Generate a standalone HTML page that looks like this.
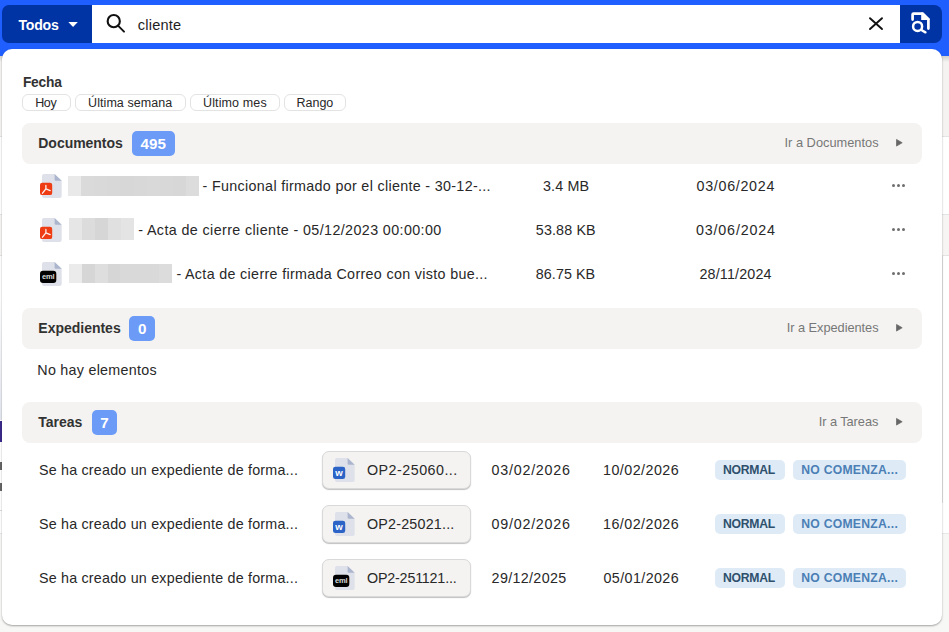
<!DOCTYPE html>
<html><head><meta charset="utf-8">
<style>
*{box-sizing:border-box;margin:0;padding:0}
html,body{width:949px;height:632px;overflow:hidden;background:#f7f7f5;font-family:"Liberation Sans",sans-serif;color:#2e2e2e}
.abs{position:absolute}
.t{position:absolute;white-space:nowrap;line-height:1}
#topbar{position:absolute;left:0;top:0;width:949px;height:56px;background:#1f5eff}
#todos{left:2px;top:5px;width:90px;height:38px;background:#0033a3;border-radius:7px 0 0 7px}
#input{left:92px;top:5px;width:808px;height:38px;background:#fff}
#sbtn{left:900px;top:5px;width:42px;height:38px;background:#0033a3;border-radius:0 8px 8px 0}
#panel{left:2px;top:49px;width:940px;height:576px;background:#fff;border-radius:10px;box-shadow:0 1px 2px rgba(0,0,0,.35)}
.bar{position:absolute;left:22px;width:900px;height:41px;background:#f4f3f1;border-radius:8px}
.cnt{position:absolute;height:25px;background:#6b9bf7;border-radius:5px}
.tri{position:absolute;width:0;height:0;border-top:3.75px solid transparent;border-bottom:3.75px solid transparent;border-left:6.4px solid #666}
.chip{position:absolute;top:94px;height:16.6px;border:1px solid #e3e3e3;border-radius:6px;background:#fff}
.blur{position:absolute;display:flex}
.blur i{display:block;flex:1;height:100%}
.dots{position:absolute;width:14px;height:4px}
.dots b{position:absolute;top:0;width:3px;height:3px;border-radius:50%;background:#6e6e6e}
.fchip{position:absolute;left:322px;width:149px;height:38px;background:#f4f3f1;border:1px solid #d9d9d9;border-radius:7px;box-shadow:0 1px 1px rgba(0,0,0,.25)}
.st{position:absolute;height:20px;background:#deebf7;border-radius:5px}
</style></head><body>
<div class="abs" style="left:0;top:56px;width:949px;height:80px;background:#f4f3f1"></div><div class="abs" style="left:0;top:56px;width:949px;height:6px;background:linear-gradient(#cfcfcf,#f4f3f1)"></div><div class="abs" style="left:0;top:135.5px;width:949px;height:1px;background:#e4e4e4"></div><div class="abs" style="left:0;top:136.5px;width:949px;height:77px;background:#fff"></div><div class="abs" style="left:0;top:213.5px;width:949px;height:1px;background:#e4e4e4"></div><div class="abs" style="left:0;top:214.5px;width:949px;height:40.5px;background:#f6f5f3"></div><div class="abs" style="left:0;top:255px;width:949px;height:1px;background:#e4e4e4"></div><div class="abs" style="left:0;top:256px;width:949px;height:277px;background:#fff"></div><div class="abs" style="left:0;top:300px;width:2px;height:120px;background:linear-gradient(#fff,#e3e6ee)"></div><div class="abs" style="left:0;top:420.5px;width:2px;height:21px;background:#3b2a8c"></div><div class="abs" style="left:0;top:462px;width:1.5px;height:8px;background:#666"></div><div class="abs" style="left:0;top:483px;width:1.5px;height:8px;background:#666"></div><div class="abs" style="left:0;top:509.5px;width:2px;height:1px;background:#ddd"></div><div class="abs" style="left:0;top:533px;width:949px;height:1px;background:#e8e8e8"></div><div class="abs" style="left:942px;top:256px;width:1px;height:247px;background:#e2e2e2"></div>
<div id="topbar"></div><div id="todos" class="abs"></div><div id="input" class="abs"></div><div id="sbtn" class="abs"></div><div id="panel" class="abs"></div>
<svg class="abs" style="left:0;top:0" width="949" height="50"><polygon points="68.3,21.9 77.8,21.9 73.05,26.9" fill="#fff"/><circle cx="113.75" cy="21.15" r="6.1" stroke="#111" stroke-width="2.1" fill="none"/><line x1="118" y1="25.6" x2="124" y2="31.6" stroke="#111" stroke-width="2" stroke-linecap="round"/><path d="M870 18.2L882 29M882 18.2L870 29" stroke="#111" stroke-width="1.9" stroke-linecap="round"/><path d="M912.6 19.6V14.6Q912.6 13.7 913.5 13.7H922.6L928.4 19.5V28.6" stroke="#fff" stroke-width="2.7" fill="none" stroke-linecap="round" stroke-linejoin="round"/><path d="M921.2 12.4H923.3L929.7 18.8V20H921.2Z" fill="#fff"/><circle cx="917.6" cy="26.4" r="4.5" stroke="#fff" stroke-width="2.5" fill="none"/><line x1="921.4" y1="30" x2="925.4" y2="32.3" stroke="#fff" stroke-width="2.5" stroke-linecap="round"/></svg>
<div class="chip" style="left:22px;width:48.6px"></div>
<div class="chip" style="left:75px;width:110.5px"></div>
<div class="chip" style="left:190.4px;width:89.2px"></div>
<div class="chip" style="left:284.3px;width:62.2px"></div>
<div class="bar" style="top:123px"></div>
<div class="cnt" style="left:132px;top:131px;width:43px"></div>
<svg class="abs" style="left:890px;top:133px" width="20" height="20" viewBox="890 133 20 20"><polygon points="896.5,139.4 902.2,142.75 896.5,146.1" fill="#666" stroke="#666" stroke-width="0.7" stroke-linejoin="round"/></svg>
<div class="bar" style="top:308px"></div>
<div class="cnt" style="left:129px;top:316px;width:26px"></div>
<svg class="abs" style="left:890px;top:318px" width="20" height="20" viewBox="890 318 20 20"><polygon points="896.5,324.4 902.2,327.75 896.5,331.1" fill="#666" stroke="#666" stroke-width="0.7" stroke-linejoin="round"/></svg>
<div class="bar" style="top:402px"></div>
<div class="cnt" style="left:92px;top:410px;width:25px"></div>
<svg class="abs" style="left:890px;top:412px" width="20" height="20" viewBox="890 412 20 20"><polygon points="896.5,418.4 902.2,421.75 896.5,425.1" fill="#666" stroke="#666" stroke-width="0.7" stroke-linejoin="round"/></svg>
<svg class="abs" style="left:40px;top:174px" width="24" height="25" viewBox="0 0 24 25"><path d="M4 0H14.6L21.7 7V22A2 2 0 0 1 19.7 24H4A2 2 0 0 1 2 22V2A2 2 0 0 1 4 0Z" fill="#dee1e9"/><path d="M14.6 0L21.7 6.8H16A1.4 1.4 0 0 1 14.6 5.4Z" fill="#abb5cd"/><rect x="0" y="8.7" width="12.2" height="12.4" rx="2.2" fill="#ee3c14"/><path d="M5.9 11.4V14.8L2.5 19.2M5.9 14.8L10.2 16.6" stroke="#fff" stroke-width="1.3" fill="none" stroke-linecap="round" stroke-linejoin="round" opacity=".92"/></svg>
<div class="blur" style="left:68.1px;top:176.1px;width:130.9px;height:19.5px"><i style="background:#e9e9e9"></i><i style="background:#dadada"></i><i style="background:#d9d9d9"></i><i style="background:#d8d8d8"></i><i style="background:#d7d7d7"></i><i style="background:#d8d8d8"></i><i style="background:#d9d9d9"></i><i style="background:#d8d8d8"></i><i style="background:#d7d7d7"></i><i style="background:#dcdcdc"></i></div>
<div class="dots" style="left:891.5px;top:184.4px"><b style="left:0"></b><b style="left:5px"></b><b style="left:10px"></b></div>
<svg class="abs" style="left:40px;top:218px" width="24" height="25" viewBox="0 0 24 25"><path d="M4 0H14.6L21.7 7V22A2 2 0 0 1 19.7 24H4A2 2 0 0 1 2 22V2A2 2 0 0 1 4 0Z" fill="#dee1e9"/><path d="M14.6 0L21.7 6.8H16A1.4 1.4 0 0 1 14.6 5.4Z" fill="#abb5cd"/><rect x="0" y="8.7" width="12.2" height="12.4" rx="2.2" fill="#ee3c14"/><path d="M5.9 11.4V14.8L2.5 19.2M5.9 14.8L10.2 16.6" stroke="#fff" stroke-width="1.3" fill="none" stroke-linecap="round" stroke-linejoin="round" opacity=".92"/></svg>
<div class="blur" style="left:69.1px;top:218px;width:64.80000000000001px;height:21.7px"><i style="background:#e6e6e6"></i><i style="background:#dcdcdc"></i><i style="background:#d6d6d6"></i><i style="background:#e0e0e0"></i><i style="background:#e4e4e4"></i></div>
<div class="dots" style="left:891.5px;top:228.4px"><b style="left:0"></b><b style="left:5px"></b><b style="left:10px"></b></div>
<svg class="abs" style="left:40px;top:262px" width="24" height="25" viewBox="0 0 24 25"><path d="M4 0H14.6L21.7 7V22A2 2 0 0 1 19.7 24H4A2 2 0 0 1 2 22V2A2 2 0 0 1 4 0Z" fill="#dee1e9"/><path d="M14.6 0L21.7 6.8H16A1.4 1.4 0 0 1 14.6 5.4Z" fill="#abb5cd"/><rect x="0" y="8.7" width="16.3" height="12.4" rx="3" fill="#000"/><text x="8.1" y="16.9" font-family="Liberation Sans" font-weight="bold" font-size="7.6" fill="#d8d8d8" text-anchor="middle" letter-spacing="-0.3">eml</text></svg>
<div class="blur" style="left:69.1px;top:263.9px;width:102.80000000000001px;height:18.8px"><i style="background:#ebebeb"></i><i style="background:#d6d6d6"></i><i style="background:#dedede"></i><i style="background:#d6d6d6"></i><i style="background:#d9d9d9"></i><i style="background:#d9d9d9"></i><i style="background:#d9d9d9"></i><i style="background:#dcdcdc"></i></div>
<div class="dots" style="left:891.5px;top:272.4px"><b style="left:0"></b><b style="left:5px"></b><b style="left:10px"></b></div>
<div class="fchip" style="top:451.3px"></div>
<svg class="abs" style="left:333px;top:458px" width="24" height="25" viewBox="0 0 24 25"><path d="M4 0H14.6L21.7 7V22A2 2 0 0 1 19.7 24H4A2 2 0 0 1 2 22V2A2 2 0 0 1 4 0Z" fill="#dee1e9"/><path d="M14.6 0L21.7 6.8H16A1.4 1.4 0 0 1 14.6 5.4Z" fill="#abb5cd"/><rect x="0" y="8.7" width="12.2" height="12.4" rx="2.4" fill="#2b63c6"/><text x="6.1" y="18.4" font-family="Liberation Sans" font-weight="bold" font-size="9.6" fill="#fff" text-anchor="middle">w</text></svg>
<div class="st" style="left:715px;top:460px;width:70px"></div>
<div class="st" style="left:793px;top:460px;width:112.5px"></div>
<div class="fchip" style="top:505.3px"></div>
<svg class="abs" style="left:333px;top:512px" width="24" height="25" viewBox="0 0 24 25"><path d="M4 0H14.6L21.7 7V22A2 2 0 0 1 19.7 24H4A2 2 0 0 1 2 22V2A2 2 0 0 1 4 0Z" fill="#dee1e9"/><path d="M14.6 0L21.7 6.8H16A1.4 1.4 0 0 1 14.6 5.4Z" fill="#abb5cd"/><rect x="0" y="8.7" width="12.2" height="12.4" rx="2.4" fill="#2b63c6"/><text x="6.1" y="18.4" font-family="Liberation Sans" font-weight="bold" font-size="9.6" fill="#fff" text-anchor="middle">w</text></svg>
<div class="st" style="left:715px;top:514px;width:70px"></div>
<div class="st" style="left:793px;top:514px;width:112.5px"></div>
<div class="fchip" style="top:559.3px"></div>
<svg class="abs" style="left:333px;top:566px" width="24" height="25" viewBox="0 0 24 25"><path d="M4 0H14.6L21.7 7V22A2 2 0 0 1 19.7 24H4A2 2 0 0 1 2 22V2A2 2 0 0 1 4 0Z" fill="#dee1e9"/><path d="M14.6 0L21.7 6.8H16A1.4 1.4 0 0 1 14.6 5.4Z" fill="#abb5cd"/><rect x="0" y="8.7" width="16.3" height="12.4" rx="3" fill="#000"/><text x="8.1" y="16.9" font-family="Liberation Sans" font-weight="bold" font-size="7.6" fill="#d8d8d8" text-anchor="middle" letter-spacing="-0.3">eml</text></svg>
<div class="st" style="left:715px;top:568px;width:70px"></div>
<div class="st" style="left:793px;top:568px;width:112.5px"></div>
<div class="t" style="left:18.40px;top:18.06px;font-size:14.1px;font-weight:bold;color:#fff;letter-spacing:-0.197px">Todos</div>
<div class="t" style="left:137.80px;top:17.54px;font-size:14.6px;font-weight:normal;color:#1e1e1e;letter-spacing:0.189px">cliente</div>
<div class="t" style="left:22.90px;top:75.82px;font-size:13.8px;font-weight:bold;color:#323232;letter-spacing:-0.225px">Fecha</div>
<div class="t" style="left:35.20px;top:96.52px;font-size:12.5px;font-weight:normal;color:#282828;letter-spacing:-0.390px">Hoy</div>
<div class="t" style="left:88.10px;top:96.52px;font-size:12.5px;font-weight:normal;color:#282828;letter-spacing:0.058px">Última semana</div>
<div class="t" style="left:203.00px;top:96.52px;font-size:12.5px;font-weight:normal;color:#282828;letter-spacing:0.127px">Último mes</div>
<div class="t" style="left:296.60px;top:96.52px;font-size:12.5px;font-weight:normal;color:#282828;letter-spacing:-0.046px">Rango</div>
<div class="t" style="left:38.30px;top:136.25px;font-size:14.0px;font-weight:bold;color:#323232;letter-spacing:-0.033px">Documentos</div>
<div class="t" style="left:784.50px;top:136.96px;font-size:12.8px;font-weight:normal;color:#777;letter-spacing:0.015px">Ir a Documentos</div>
<div class="t" style="left:140.40px;top:135.93px;font-size:15.2px;font-weight:bold;color:#fff;letter-spacing:0.053px">495</div>
<div class="t" style="left:38.30px;top:321.25px;font-size:14.0px;font-weight:bold;color:#323232;letter-spacing:-0.009px">Expedientes</div>
<div class="t" style="left:786.70px;top:321.96px;font-size:12.8px;font-weight:normal;color:#777;letter-spacing:-0.039px">Ir a Expedientes</div>
<div class="t" style="left:138.00px;top:320.93px;font-size:15.2px;font-weight:bold;color:#fff;letter-spacing:0.000px">0</div>
<div class="t" style="left:38.30px;top:415.25px;font-size:14.0px;font-weight:bold;color:#323232;letter-spacing:-0.004px">Tareas</div>
<div class="t" style="left:818.70px;top:415.96px;font-size:12.8px;font-weight:normal;color:#777;letter-spacing:-0.056px">Ir a Tareas</div>
<div class="t" style="left:100.30px;top:414.93px;font-size:15.2px;font-weight:bold;color:#fff;letter-spacing:0.000px">7</div>
<div class="t" style="left:202.60px;top:178.90px;font-size:14.3px;font-weight:normal;color:#282828;letter-spacing:0.325px">- Funcional firmado por el cliente - 30-12-...</div>
<div class="t" style="left:543.00px;top:178.90px;font-size:14.3px;font-weight:normal;color:#282828;letter-spacing:0.149px">3.4 MB</div>
<div class="t" style="left:696.50px;top:178.90px;font-size:14.3px;font-weight:normal;color:#282828;letter-spacing:0.700px">03/06/2024</div>
<div class="t" style="left:138.20px;top:222.80px;font-size:14.3px;font-weight:normal;color:#282828;letter-spacing:0.394px">- Acta de cierre cliente - 05/12/2023 00:00:00</div>
<div class="t" style="left:535.80px;top:222.80px;font-size:14.3px;font-weight:normal;color:#282828;letter-spacing:0.145px">53.88 KB</div>
<div class="t" style="left:696.00px;top:222.80px;font-size:14.3px;font-weight:normal;color:#282828;letter-spacing:0.822px">03/06/2024</div>
<div class="t" style="left:176.40px;top:267.00px;font-size:14.3px;font-weight:normal;color:#282828;letter-spacing:0.332px">- Acta de cierre firmada Correo con visto bue...</div>
<div class="t" style="left:535.80px;top:267.00px;font-size:14.3px;font-weight:normal;color:#282828;letter-spacing:0.074px">86.75 KB</div>
<div class="t" style="left:699.40px;top:267.00px;font-size:14.3px;font-weight:normal;color:#282828;letter-spacing:0.184px">28/11/2024</div>
<div class="t" style="left:37.30px;top:363.20px;font-size:14.3px;font-weight:normal;color:#282828;letter-spacing:0.268px">No hay elementos</div>
<div class="t" style="left:38.90px;top:462.60px;font-size:14.3px;font-weight:normal;color:#282828;letter-spacing:0.214px">Se ha creado un expediente de forma...</div>
<div class="t" style="left:367.00px;top:462.80px;font-size:14.3px;font-weight:normal;color:#282828;letter-spacing:0.476px">OP2-25060...</div>
<div class="t" style="left:491.60px;top:462.80px;font-size:14.3px;font-weight:normal;color:#282828;letter-spacing:0.755px">03/02/2026</div>
<div class="t" style="left:603.00px;top:462.80px;font-size:14.3px;font-weight:normal;color:#282828;letter-spacing:0.455px">10/02/2026</div>
<div class="t" style="left:723.00px;top:464.07px;font-size:12.2px;font-weight:bold;color:#2f506d;letter-spacing:-0.267px">NORMAL</div>
<div class="t" style="left:801.20px;top:464.07px;font-size:12.2px;font-weight:bold;color:#4b7fb5;letter-spacing:0.263px">NO COMENZA...</div>
<div class="t" style="left:38.90px;top:516.60px;font-size:14.3px;font-weight:normal;color:#282828;letter-spacing:0.214px">Se ha creado un expediente de forma...</div>
<div class="t" style="left:367.00px;top:516.80px;font-size:14.3px;font-weight:normal;color:#282828;letter-spacing:0.203px">OP2-25021...</div>
<div class="t" style="left:491.60px;top:516.80px;font-size:14.3px;font-weight:normal;color:#282828;letter-spacing:0.755px">09/02/2026</div>
<div class="t" style="left:603.00px;top:516.80px;font-size:14.3px;font-weight:normal;color:#282828;letter-spacing:0.455px">16/02/2026</div>
<div class="t" style="left:723.00px;top:518.07px;font-size:12.2px;font-weight:bold;color:#2f506d;letter-spacing:-0.267px">NORMAL</div>
<div class="t" style="left:801.20px;top:518.07px;font-size:12.2px;font-weight:bold;color:#4b7fb5;letter-spacing:0.263px">NO COMENZA...</div>
<div class="t" style="left:38.90px;top:570.60px;font-size:14.3px;font-weight:normal;color:#282828;letter-spacing:0.214px">Se ha creado un expediente de forma...</div>
<div class="t" style="left:367.00px;top:570.80px;font-size:14.3px;font-weight:normal;color:#282828;letter-spacing:-0.188px">OP2-251121...</div>
<div class="t" style="left:491.60px;top:570.80px;font-size:14.3px;font-weight:normal;color:#282828;letter-spacing:0.333px">29/12/2025</div>
<div class="t" style="left:603.50px;top:570.80px;font-size:14.3px;font-weight:normal;color:#282828;letter-spacing:0.400px">05/01/2026</div>
<div class="t" style="left:723.00px;top:572.07px;font-size:12.2px;font-weight:bold;color:#2f506d;letter-spacing:-0.267px">NORMAL</div>
<div class="t" style="left:801.20px;top:572.07px;font-size:12.2px;font-weight:bold;color:#4b7fb5;letter-spacing:0.263px">NO COMENZA...</div>
</body></html>
